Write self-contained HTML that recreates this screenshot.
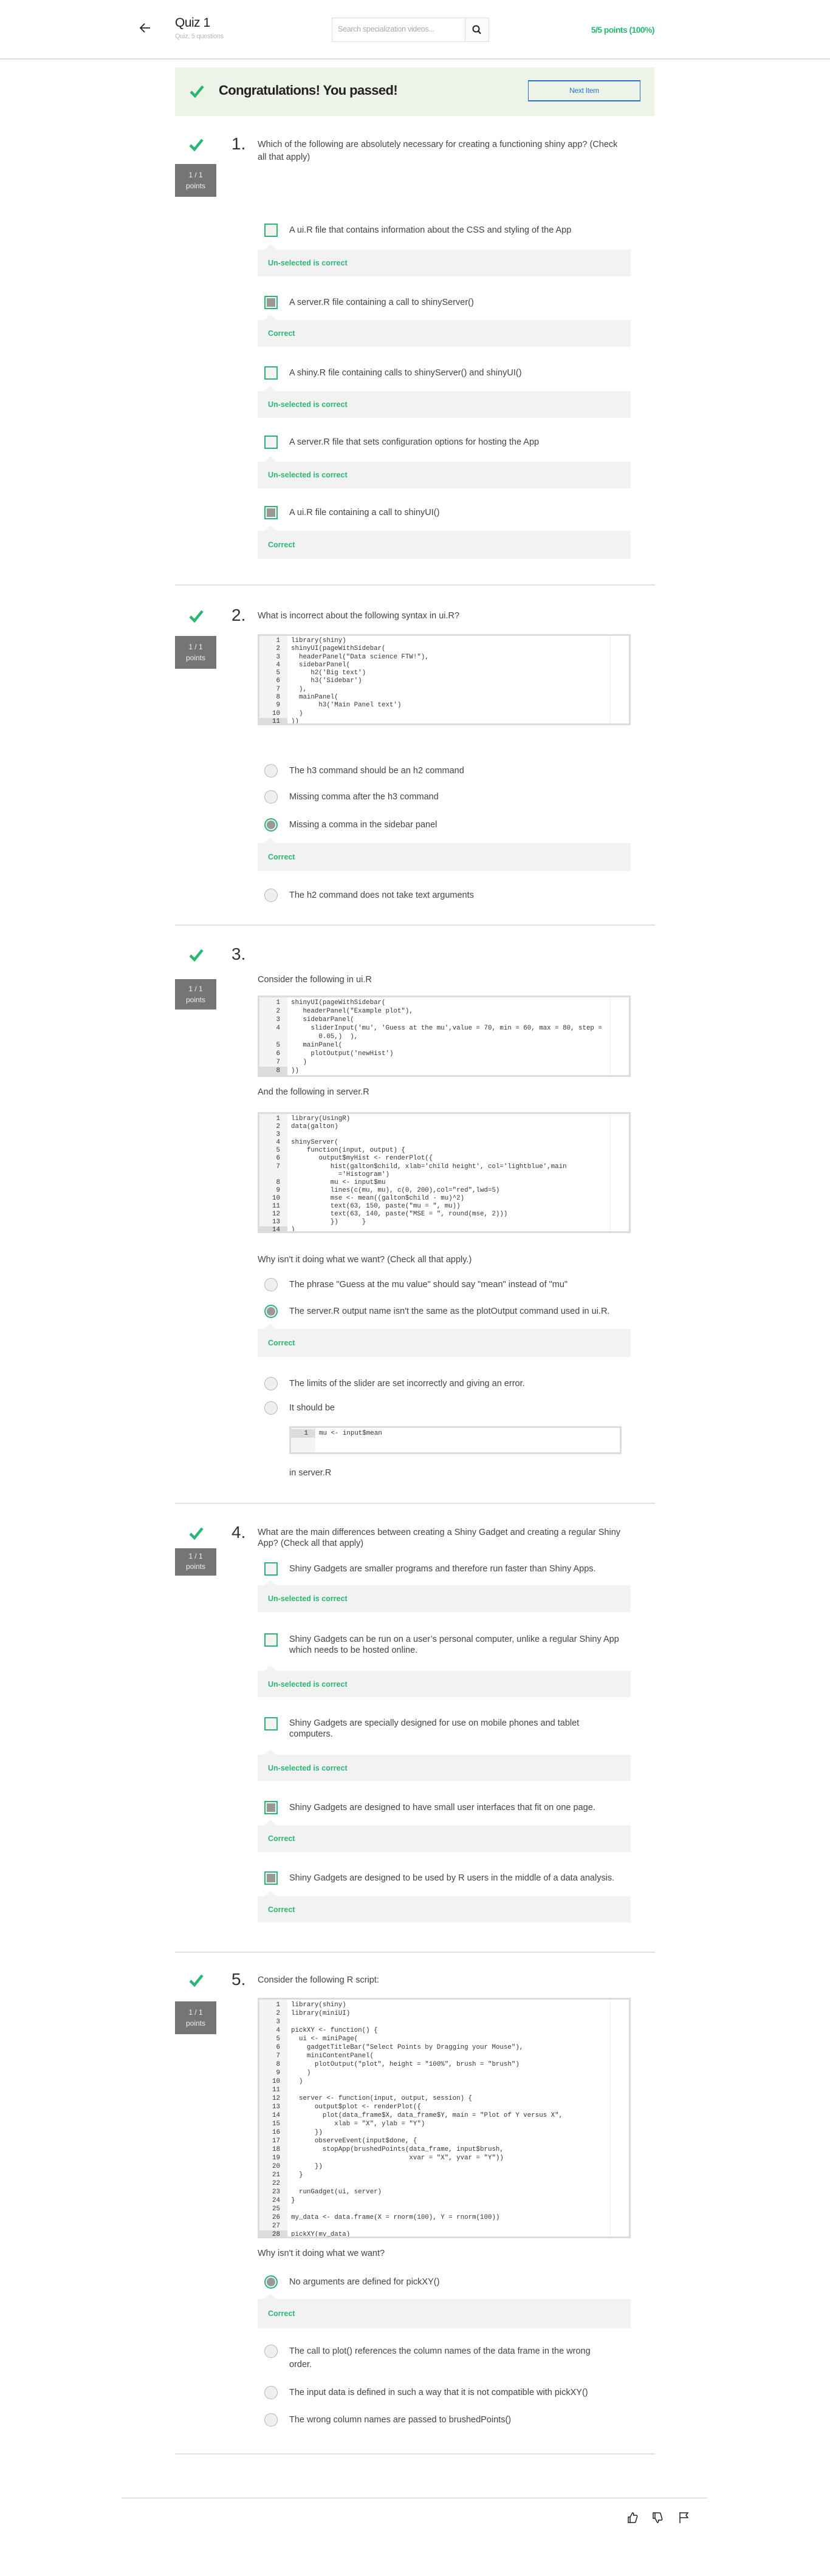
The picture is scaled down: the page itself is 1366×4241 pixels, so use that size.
<!DOCTYPE html>
<html><head><meta charset="utf-8">
<style>
*{box-sizing:border-box;margin:0;padding:0}
body{width:1366px;height:4241px;position:relative;background:#fff;font-family:"Liberation Sans",sans-serif;color:#3d3d3d;overflow:hidden}
.a{position:absolute}
.hline{position:absolute;height:2px;background:#e3e3e3}
.chk{position:absolute;width:24px;height:22px}
.num{position:absolute;left:381px;font-size:28px;color:#333;font-weight:300;line-height:30px}
.qt{position:absolute;left:424px;width:602px;font-size:14.5px;line-height:21px;color:#444}
.pts{position:absolute;left:288px;width:68px;height:54px;background:#757575;color:#eee;font-size:12px;text-align:center;padding-top:9px;line-height:18px}
.opt{position:absolute;left:435px;width:600px;height:22px}
.cb{position:absolute;left:0;top:0;width:22px;height:22px;border:2px solid #2bb673;background:#f4f4f4}
.cb.on::after{content:"";position:absolute;left:2px;top:2px;width:14px;height:14px;background:#999}
.rd{position:absolute;left:0;top:0;width:22px;height:22px;border:1px solid #b5b5b5;border-radius:50%;background:#efefef}
.rd.on{border:2px solid #2bb673}
.rd.on::after{content:"";position:absolute;left:2px;top:2px;width:14px;height:14px;border-radius:50%;background:#999}
.ot{position:absolute;left:41px;top:1px;width:545px;font-size:14.5px;line-height:20px;color:#444}
.fb{position:absolute;left:424px;width:614px;background:#f2f2f2;color:#2bb673;font-weight:bold;font-size:12.5px;padding-left:17px;display:flex;align-items:center}
.fb::before{content:"";position:absolute;left:11px;top:-9px;border-left:10px solid transparent;border-right:10px solid transparent;border-bottom:9px solid #f2f2f2}
.code{position:absolute;left:424px;width:614px;border:3px solid #dcdcdc;background:#fff;overflow:hidden;font-family:"Liberation Mono",monospace;font-size:10.8px;color:#333}
.code .g{position:absolute;left:0;top:0;bottom:0;width:46px;background:#f4f4f4}
.code .rl{position:absolute;right:30px;top:0;bottom:0;width:1px;background:#eee}
.code .ln{position:relative;display:flex;white-space:pre}
.code .n{width:46px;text-align:right;padding-right:12px;flex:none;color:#333}
.code .ln.act .n{background:#dcdcdc}
.code .t{padding-left:6px;white-space:pre-wrap;width:530px}
.p{position:absolute;left:424px;font-size:14.5px;color:#444}
</style></head><body>

<svg class="a" style="left:229px;top:36px" width="20" height="20" viewBox="0 0 20 20"><path d="M18 10H3M9 3L2 10l7 7" fill="none" stroke="#222" stroke-width="1.8"/></svg>
<div class="a" style="left:288px;top:26px;font-size:21px;color:#222;letter-spacing:-0.5px">Quiz 1</div>
<div class="a" style="left:288px;top:54px;font-size:11px;color:#bbb;letter-spacing:-0.3px">Quiz, 5 questions</div>
<div class="a" style="left:546px;top:29px;width:259px;height:40px;border:1px solid #ddd;background:#fff"></div>
<div class="a" style="left:765px;top:30px;width:39px;height:38px;background:#fafafa;border-left:1px solid #ddd"></div>
<div class="a" style="left:556px;top:41px;font-size:12.5px;color:#aaa;letter-spacing:-0.3px">Search specialization videos...</div>
<svg class="a" style="left:777px;top:41px" width="15" height="16" viewBox="0 0 15 16"><circle cx="6.5" cy="6.5" r="5" fill="none" stroke="#222" stroke-width="2"/><path d="M10 10l4 4.5" stroke="#222" stroke-width="2.2"/></svg>
<div class="a" style="left:958px;top:41px;width:119px;text-align:right;font-size:14px;color:#2bb673;font-weight:bold;letter-spacing:-0.6px">5/5 points (100%)</div>
<div class="hline" style="left:0;top:96px;width:1366px;background:#ddd"></div>

<div class="a" style="left:288px;top:111px;width:789px;height:80px;background:#edf4e7"></div>
<svg class="chk" style="left:312px;top:139px" viewBox="0 0 24 22"><path d="M2 12l7 7L22 3" fill="none" stroke="#2bb673" stroke-width="4.5"/></svg>
<div class="a" style="left:360px;top:136px;font-size:22px;font-weight:bold;color:#222;letter-spacing:-0.6px">Congratulations! You passed!</div>
<div class="a" style="left:869px;top:132px;width:185px;height:35px;border:1px solid #2a73cc;border-width:2px 1px 2px 1px;color:#2a73cc;font-size:12px;text-align:center;line-height:31px;letter-spacing:-0.3px">Next Item</div>

<svg class="chk" style="left:311px;top:227px" viewBox="0 0 24 22"><path d="M2 12l7 7L22 3" fill="none" stroke="#2bb673" stroke-width="4.5"/></svg>
<div class="num" style="top:222px">1.</div>
<div class="qt" style="top:228px">Which of the following are absolutely necessary for creating a functioning shiny app? (Check all that apply)</div>
<div class="pts" style="top:270px">1 / 1<br>points</div>

<div class="opt" style="top:368px"><div class="cb"></div><div class="ot">A ui.R file that contains information about the CSS and styling of the App</div></div>
<div class="fb" style="top:411px;height:44px">Un-selected is correct</div>
<div class="opt" style="top:487px"><div class="cb on"></div><div class="ot">A server.R file containing a call to shinyServer()</div></div>
<div class="fb" style="top:527px;height:44px">Correct</div>
<div class="opt" style="top:603px"><div class="cb"></div><div class="ot">A shiny.R file containing calls to shinyServer() and shinyUI()</div></div>
<div class="fb" style="top:644px;height:44px">Un-selected is correct</div>
<div class="opt" style="top:717px"><div class="cb"></div><div class="ot">A server.R file that sets configuration options for hosting the App</div></div>
<div class="fb" style="top:760px;height:44px">Un-selected is correct</div>
<div class="opt" style="top:833px"><div class="cb on"></div><div class="ot">A ui.R file containing a call to shinyUI()</div></div>
<div class="fb" style="top:874px;height:46px">Correct</div>

<div class="hline" style="left:288px;top:962px;width:790px"></div>

<svg class="chk" style="left:311px;top:1003px" viewBox="0 0 24 22"><path d="M2 12l7 7L22 3" fill="none" stroke="#2bb673" stroke-width="4.5"/></svg>
<div class="num" style="top:998px">2.</div>
<div class="qt" style="top:1004px">What is incorrect about the following syntax in ui.R?</div>
<div class="pts" style="top:1047px">1 / 1<br>points</div>
<div class="code" style="top:1044px;height:150px;line-height:13.3px;padding-top:2px"><div class="g"></div><div class="rl"></div>
<div class="ln"><span class="n">1</span><span class="t">library(shiny)</span></div>
<div class="ln"><span class="n">2</span><span class="t">shinyUI(pageWithSidebar(</span></div>
<div class="ln"><span class="n">3</span><span class="t">  headerPanel("Data science FTW!"),</span></div>
<div class="ln"><span class="n">4</span><span class="t">  sidebarPanel(</span></div>
<div class="ln"><span class="n">5</span><span class="t">     h2('Big text')</span></div>
<div class="ln"><span class="n">6</span><span class="t">     h3('Sidebar')</span></div>
<div class="ln"><span class="n">7</span><span class="t">  ),</span></div>
<div class="ln"><span class="n">8</span><span class="t">  mainPanel(</span></div>
<div class="ln"><span class="n">9</span><span class="t">       h3('Main Panel text')</span></div>
<div class="ln"><span class="n">10</span><span class="t">  )</span></div>
<div class="ln act"><span class="n">11</span><span class="t">))</span></div>
</div>
<div class="opt" style="top:1258px"><div class="rd"></div><div class="ot">The h3 command should be an h2 command</div></div>
<div class="opt" style="top:1301px"><div class="rd"></div><div class="ot">Missing comma after the h3 command</div></div>
<div class="opt" style="top:1347px"><div class="rd on"></div><div class="ot">Missing a comma in the sidebar panel</div></div>
<div class="fb" style="top:1388px;height:46px">Correct</div>
<div class="opt" style="top:1463px"><div class="rd"></div><div class="ot">The h2 command does not take text arguments</div></div>

<div class="hline" style="left:288px;top:1522px;width:790px"></div>

<svg class="chk" style="left:311px;top:1561px" viewBox="0 0 24 22"><path d="M2 12l7 7L22 3" fill="none" stroke="#2bb673" stroke-width="4.5"/></svg>
<div class="num" style="top:1556px">3.</div>
<div class="pts" style="top:1612px;height:50px;padding-top:7px">1 / 1<br>points</div>
<div class="p" style="top:1605px">Consider the following in ui.R</div>
<div class="code" style="top:1639px;height:134px;line-height:14px;padding-top:2px"><div class="g"></div><div class="rl"></div>
<div class="ln"><span class="n">1</span><span class="t">shinyUI(pageWithSidebar(</span></div>
<div class="ln"><span class="n">2</span><span class="t">   headerPanel("Example plot"),</span></div>
<div class="ln"><span class="n">3</span><span class="t">   sidebarPanel(</span></div>
<div class="ln"><span class="n">4</span><span class="t">     sliderInput('mu', 'Guess at the mu',value = 70, min = 60, max = 80, step =
       0.05,)  ),</span></div>
<div class="ln"><span class="n">5</span><span class="t">   mainPanel(</span></div>
<div class="ln"><span class="n">6</span><span class="t">     plotOutput('newHist')</span></div>
<div class="ln"><span class="n">7</span><span class="t">   )</span></div>
<div class="ln act"><span class="n">8</span><span class="t">))</span></div>
</div>
<div class="p" style="top:1790px">And the following in server.R</div>
<div class="code" style="top:1831px;height:199px;line-height:13.1px;padding-top:2px"><div class="g"></div><div class="rl"></div>
<div class="ln"><span class="n">1</span><span class="t">library(UsingR)</span></div>
<div class="ln"><span class="n">2</span><span class="t">data(galton)</span></div>
<div class="ln"><span class="n">3</span><span class="t"> </span></div>
<div class="ln"><span class="n">4</span><span class="t">shinyServer(</span></div>
<div class="ln"><span class="n">5</span><span class="t">    function(input, output) {</span></div>
<div class="ln"><span class="n">6</span><span class="t">       output$myHist &lt;- renderPlot({</span></div>
<div class="ln"><span class="n">7</span><span class="t">          hist(galton$child, xlab='child height', col='lightblue',main
            ='Histogram')</span></div>
<div class="ln"><span class="n">8</span><span class="t">          mu &lt;- input$mu</span></div>
<div class="ln"><span class="n">9</span><span class="t">          lines(c(mu, mu), c(0, 200),col="red",lwd=5)</span></div>
<div class="ln"><span class="n">10</span><span class="t">          mse &lt;- mean((galton$child - mu)^2)</span></div>
<div class="ln"><span class="n">11</span><span class="t">          text(63, 150, paste("mu = ", mu))</span></div>
<div class="ln"><span class="n">12</span><span class="t">          text(63, 140, paste("MSE = ", round(mse, 2)))</span></div>
<div class="ln"><span class="n">13</span><span class="t">          })      }</span></div>
<div class="ln act"><span class="n">14</span><span class="t">)</span></div>
</div>
<div class="p" style="top:2066px">Why isn't it doing what we want? (Check all that apply.)</div>
<div class="opt" style="top:2104px"><div class="rd"></div><div class="ot" style="width:580px">The phrase "Guess at the mu value" should say "mean" instead of "mu"</div></div>
<div class="opt" style="top:2148px"><div class="rd on"></div><div class="ot" style="width:580px">The server.R output name isn't the same as the plotOutput command used in ui.R.</div></div>
<div class="fb" style="top:2188px;height:46px">Correct</div>
<div class="opt" style="top:2267px"><div class="rd"></div><div class="ot">The limits of the slider are set incorrectly and giving an error.</div></div>
<div class="opt" style="top:2307px"><div class="rd"></div><div class="ot">It should be</div></div>
<div class="code" style="left:476px;width:547px;top:2348px;height:46px;line-height:14px;padding-top:2px"><div class="g" style="width:40px"></div>
<div class="ln act"><span class="n" style="width:40px">1</span><span class="t">mu &lt;- input$mean</span></div>
</div>
<div class="p" style="left:476px;top:2417px">in server.R</div>

<div class="hline" style="left:288px;top:2474px;width:790px"></div>

<svg class="chk" style="left:311px;top:2513px" viewBox="0 0 24 22"><path d="M2 12l7 7L22 3" fill="none" stroke="#2bb673" stroke-width="4.5"/></svg>
<div class="num" style="top:2508px">4.</div>
<div class="qt" style="top:2514px;line-height:18px;width:614px">What are the main differences between creating a Shiny Gadget and creating a regular Shiny App? (Check all that apply)</div>
<div class="pts" style="top:2549px;height:45px;padding-top:5px;line-height:17px">1 / 1<br>points</div>
<div class="opt" style="top:2572px"><div class="cb"></div><div class="ot" style="width:560px">Shiny Gadgets are smaller programs and therefore run faster than Shiny Apps.</div></div>
<div class="fb" style="top:2610px;height:44px">Un-selected is correct</div>
<div class="opt" style="top:2689px"><div class="cb"></div><div class="ot" style="line-height:18px">Shiny Gadgets can be run on a user’s personal computer, unlike a regular Shiny App which needs to be hosted online.</div></div>
<div class="fb" style="top:2751px;height:43px">Un-selected is correct</div>
<div class="opt" style="top:2827px"><div class="cb"></div><div class="ot" style="line-height:18px;width:500px">Shiny Gadgets are specially designed for use on mobile phones and tablet computers.</div></div>
<div class="fb" style="top:2889px;height:43px">Un-selected is correct</div>
<div class="opt" style="top:2965px"><div class="cb on"></div><div class="ot" style="width:580px">Shiny Gadgets are designed to have small user interfaces that fit on one page.</div></div>
<div class="fb" style="top:3005px;height:44px">Correct</div>
<div class="opt" style="top:3081px"><div class="cb on"></div><div class="ot" style="width:580px">Shiny Gadgets are designed to be used by R users in the middle of a data analysis.</div></div>
<div class="fb" style="top:3122px;height:43px">Correct</div>

<div class="hline" style="left:288px;top:3213px;width:790px"></div>

<svg class="chk" style="left:311px;top:3249px" viewBox="0 0 24 22"><path d="M2 12l7 7L22 3" fill="none" stroke="#2bb673" stroke-width="4.5"/></svg>
<div class="num" style="top:3244px">5.</div>
<div class="qt" style="top:3250px">Consider the following R script:</div>
<div class="pts" style="top:3295px">1 / 1<br>points</div>
<div class="code" style="top:3289px;height:396px;line-height:14px;padding-top:2px"><div class="g"></div><div class="rl"></div>
<div class="ln"><span class="n">1</span><span class="t">library(shiny)</span></div>
<div class="ln"><span class="n">2</span><span class="t">library(miniUI)</span></div>
<div class="ln"><span class="n">3</span><span class="t"> </span></div>
<div class="ln"><span class="n">4</span><span class="t">pickXY &lt;- function() {</span></div>
<div class="ln"><span class="n">5</span><span class="t">  ui &lt;- miniPage(</span></div>
<div class="ln"><span class="n">6</span><span class="t">    gadgetTitleBar("Select Points by Dragging your Mouse"),</span></div>
<div class="ln"><span class="n">7</span><span class="t">    miniContentPanel(</span></div>
<div class="ln"><span class="n">8</span><span class="t">      plotOutput("plot", height = "100%", brush = "brush")</span></div>
<div class="ln"><span class="n">9</span><span class="t">    )</span></div>
<div class="ln"><span class="n">10</span><span class="t">  )</span></div>
<div class="ln"><span class="n">11</span><span class="t"> </span></div>
<div class="ln"><span class="n">12</span><span class="t">  server &lt;- function(input, output, session) {</span></div>
<div class="ln"><span class="n">13</span><span class="t">      output$plot &lt;- renderPlot({</span></div>
<div class="ln"><span class="n">14</span><span class="t">        plot(data_frame$X, data_frame$Y, main = "Plot of Y versus X",</span></div>
<div class="ln"><span class="n">15</span><span class="t">           xlab = "X", ylab = "Y")</span></div>
<div class="ln"><span class="n">16</span><span class="t">      })</span></div>
<div class="ln"><span class="n">17</span><span class="t">      observeEvent(input$done, {</span></div>
<div class="ln"><span class="n">18</span><span class="t">        stopApp(brushedPoints(data_frame, input$brush,</span></div>
<div class="ln"><span class="n">19</span><span class="t">                              xvar = "X", yvar = "Y"))</span></div>
<div class="ln"><span class="n">20</span><span class="t">      })</span></div>
<div class="ln"><span class="n">21</span><span class="t">  }</span></div>
<div class="ln"><span class="n">22</span><span class="t"> </span></div>
<div class="ln"><span class="n">23</span><span class="t">  runGadget(ui, server)</span></div>
<div class="ln"><span class="n">24</span><span class="t">}</span></div>
<div class="ln"><span class="n">25</span><span class="t"> </span></div>
<div class="ln"><span class="n">26</span><span class="t">my_data &lt;- data.frame(X = rnorm(100), Y = rnorm(100))</span></div>
<div class="ln"><span class="n">27</span><span class="t"> </span></div>
<div class="ln act"><span class="n">28</span><span class="t">pickXY(my_data)</span></div>
</div>
<div class="p" style="top:3702px">Why isn't it doing what we want?</div>
<div class="opt" style="top:3746px"><div class="rd on"></div><div class="ot">No arguments are defined for pickXY()</div></div>
<div class="fb" style="top:3785px;height:48px">Correct</div>
<div class="opt" style="top:3860px"><div class="rd"></div><div class="ot" style="line-height:22px;top:0;width:520px">The call to plot() references the column names of the data frame in the wrong order.</div></div>
<div class="opt" style="top:3928px"><div class="rd"></div><div class="ot" style="width:580px">The input data is defined in such a way that it is not compatible with pickXY()</div></div>
<div class="opt" style="top:3973px"><div class="rd"></div><div class="ot">The wrong column names are passed to brushedPoints()</div></div>

<div class="hline" style="left:288px;top:4039px;width:790px"></div>

<div class="a" style="left:200px;top:4112px;width:964px;height:1px;background:#ccc"></div>
<svg class="a" style="left:1032px;top:4135px" width="18" height="20" viewBox="0 0 18 20"><path d="M2 9h3v9H2zM5 9l4-7c2 0 2 2 1.5 4H15c1.5 0 2 1.5 1.5 2.5L14 17c-.3.8-1 1-2 1H5" fill="none" stroke="#222" stroke-width="1.5"/></svg>
<svg class="a" style="left:1073px;top:4135px" width="18" height="20" viewBox="0 0 18 20"><path d="M2 2h3v9H2zM5 11l4 7c2 0 2-2 1.5-4H15c1.5 0 2-1.5 1.5-2.5L14 3c-.3-.8-1-1-2-1H5" fill="none" stroke="#222" stroke-width="1.5"/></svg>
<svg class="a" style="left:1117px;top:4135px" width="18" height="20" viewBox="0 0 18 20"><path d="M2 1v18M2 2h13l-3 4 3 4H2" fill="none" stroke="#222" stroke-width="1.5"/></svg>
</body></html>
